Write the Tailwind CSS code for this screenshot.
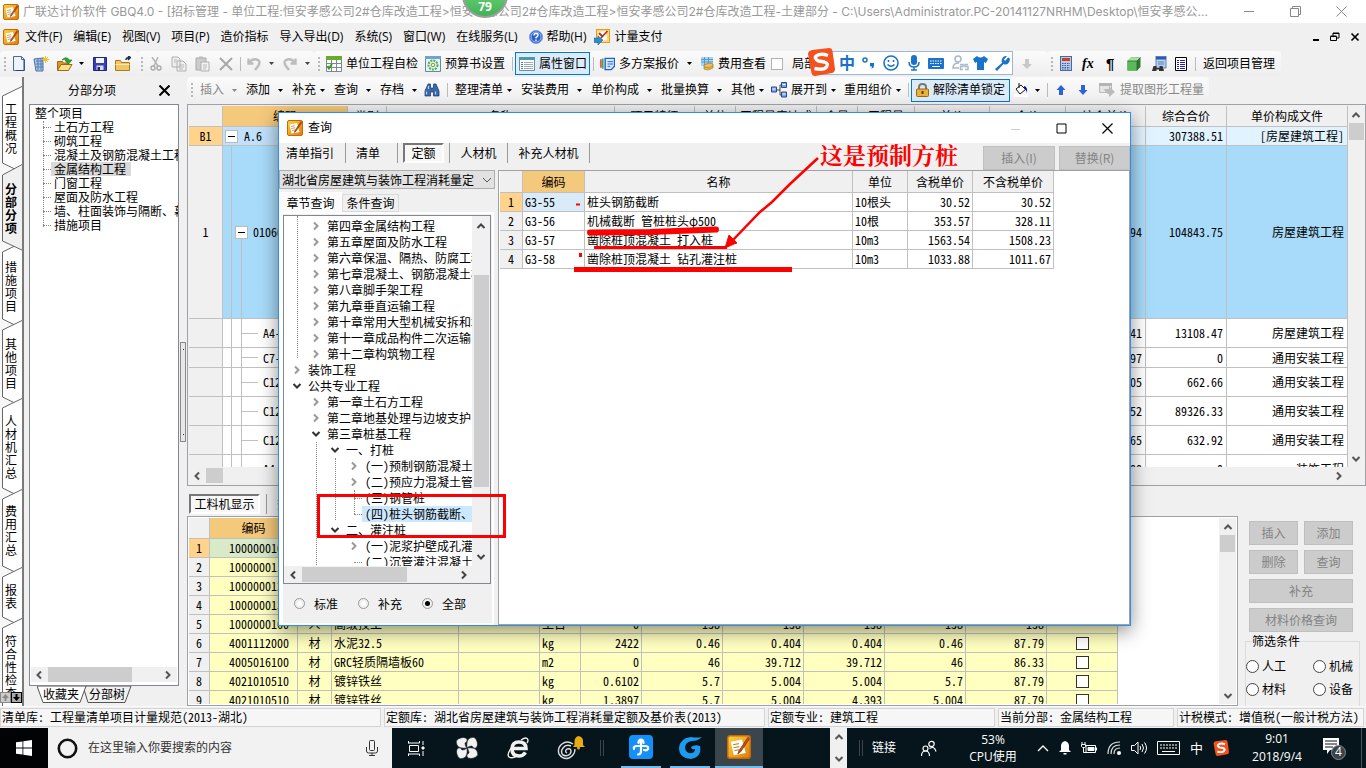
<!DOCTYPE html>
<html lang="zh-CN">
<head>
<meta charset="utf-8">
<title>广联达计价软件 GBQ4.0</title>
<script src="https://cdn.jsdelivr.net/npm/@tailwindcss/browser@4"></script>
</head>
<body class="relative flex h-screen w-full flex-col overflow-hidden bg-[#f0f0f0] font-['Open_Sans','Noto_Sans_CJK_SC',sans-serif] text-[12px] leading-4 whitespace-nowrap text-black">

<svg class="absolute size-0" aria-hidden="true">
  <defs>
    <linearGradient id="gold" x1="0" y1="0" x2="1" y2="1"><stop offset="0" stop-color="#ffd23c"/><stop offset="1" stop-color="#e07a08"/></linearGradient>
    <symbol id="app" viewBox="0 0 16 16"><rect x=".5" y=".5" width="15" height="15" rx="1.5" fill="url(#gold)" stroke="#c46a06"/><path d="M2.500 4.500 10 3l2.500 9-8 1.500z" fill="#fff"/><path d="M4 6.500l4-.8M4.300 8.500l4-.8M4.800 10.500l3.500-.7" stroke="#b98a3c" stroke-width=".8"/><path d="M14 1.500 8 10.500l-.8 2 1.800-1.200L15 2.500z" fill="#c8501a" stroke="#7d2c06" stroke-width=".5"/></symbol>
    <symbol id="left" viewBox="0 0 10 10"><path d="M7 1.500 3.500 5 7 8.500" fill="none" stroke="currentColor" stroke-width="2"/></symbol>
    <symbol id="right" viewBox="0 0 10 10"><path d="M3 1.500 6.500 5 3 8.500" fill="none" stroke="currentColor" stroke-width="2"/></symbol>
    <symbol id="up" viewBox="0 0 10 10"><path d="M1.500 7 5 3.500 8.500 7" fill="none" stroke="currentColor" stroke-width="2"/></symbol>
    <symbol id="down" viewBox="0 0 10 10"><path d="M1.500 3 5 6.500 8.500 3" fill="none" stroke="currentColor" stroke-width="2"/></symbol>
    <symbol id="tri" viewBox="0 0 5 3"><path d="M0 0h5L2.500 3z" fill="currentColor"/></symbol>
    <symbol id="sogou" viewBox="0 0 28 28"><path d="M5 2 22 0q3 0 3.500 3L28 21q0 3-3 4L8 28q-3 0-3.500-3L1 6q0-3 4-4z" fill="#f4511e"/><path d="M21 7.500Q14 5 10 7.500t1.500 5.500l6 1q4.500 1.500 2 5t-12 1.500" fill="none" stroke="#fff" stroke-width="3.400"/></symbol>
  </defs>
</svg>

<!-- Title bar -->
<header class="flex h-[23px] shrink-0 items-center bg-white pl-[3px] text-[#999]">
  <svg class="size-4"><use href="#app"/></svg>
  <h1 class="ml-1 flex-1 overflow-hidden font-['Inter','Noto_Sans_CJK_SC',sans-serif] text-[12px] font-normal">广联达计价软件 GBQ4.0 - [招标管理 - 单位工程:恒安孝感公司2#仓库改造工程&gt;恒安孝感公司2#仓库改造工程&gt;恒安孝感公司2#仓库改造工程-土建部分 - C:\Users\Administrator.PC-20141127NRHM\Desktop\恒安孝感公...</h1>
  <div class="mr-[19px] flex gap-[35px]">
    <button aria-label="最小化"><svg class="size-[11px]" viewBox="0 0 11 11"><path d="M0 5.500h10" stroke="#888"/></svg></button>
    <button aria-label="还原"><svg class="size-[11px]" viewBox="0 0 11 11"><path d="M.5 2.500h8v8h-8zM2.500 2.500v-2h8v8h-2" fill="none" stroke="#888"/></svg></button>
    <button aria-label="关闭"><svg class="size-[11px]" viewBox="0 0 11 11"><path d="M.5.5l10 10M10.500.5l-10 10" stroke="#888"/></svg></button>
  </div>
</header>

<!-- Menu bar -->
<nav class="flex h-[27px] shrink-0 items-center pl-[3px]">
  <svg class="mr-[6px] size-4"><use href="#app"/></svg>
  <div class="flex flex-1 items-center gap-[11px]">
    <button>文件(F)</button><button>编辑(E)</button><button>视图(V)</button><button>项目(P)</button><button>造价指标</button><button>导入导出(D)</button><button>系统(S)</button><button>窗口(W)</button><button>在线服务(L)</button>
    <button class="flex items-center gap-[4px]"><svg class="size-[14px]" viewBox="0 0 14 14"><circle cx="7" cy="7" r="6.500" fill="#2a5fd0" stroke="#7f9ed8"/><circle cx="7" cy="7" r="5" fill="none" stroke="#cfe0ff" stroke-width=".7"/><path d="M5 5.500Q5 3.500 7 3.500t2 1.700Q9 6.500 7 7.500v1M7 9.500V11" stroke="#fff" stroke-width="1.400" fill="none"/></svg>帮助(H)</button>
    <button class="-ml-1 flex items-center gap-[5px]"><svg class="size-4" viewBox="0 0 16 16"><rect x="2.500" y=".5" width="13" height="13" fill="#fbd67a" stroke="#e09a1c"/><path d="M4 3l8-1 1 9-7 1z" fill="#fff"/><path d="M13.500 2 7 9M5 4l3 3" stroke="#b5371c" stroke-width="1.800"/><path d="M0 9h4V7l5 4-5 5v-2.500H0z" fill="#2a8ed0" stroke="#15558a" stroke-width=".5"/></svg>计量支付</button>
  </div>
  <div class="mr-[6px] flex gap-[10px]">
    <button aria-label="最小化文档"><svg class="size-[10px]" viewBox="0 0 10 10"><path d="M3 8h6" stroke="#000" stroke-width="2"/></svg></button>
    <button aria-label="还原文档"><svg class="size-[10px]" viewBox="0 0 10 10"><path d="M.5 4.500h6v4h-6zM.5 4h6M3 4V1h6v5H7M3 1.500h6" fill="none" stroke="#000"/></svg></button>
    <button aria-label="关闭文档"><svg class="size-[10px]" viewBox="0 0 10 10"><path d="M1.500 1.500l7 7M8.500 1.500l-7 7" stroke="#000" stroke-width="1.700"/></svg></button>
  </div>
</nav>

<!-- Main toolbar -->
<div class="flex h-[27px] shrink-0 items-center" role="toolbar" aria-label="主工具栏">
  <div class="flex h-[25px] w-[138px] items-center rounded-sm bg-gradient-to-b from-[#fbfbfb] to-[#eee] pl-1">
    <i class="mr-[7px] h-[14px] w-0 border-l-2 border-dotted border-[#b8b8b8]"></i>
    <button class="w-[20px]" aria-label="新建"><svg class="w-3 h-[15px]" viewBox="0 0 12 15"><path d="M.5.5h8l3 3v11H.5z" fill="#eef4fd" stroke="#52688c"/><path d="M11 4v10.500H3" stroke="#2b4674" fill="none"/><path d="M8.500.5v3h3" fill="none" stroke="#52688c"/></svg></button>
    <button class="w-[24px]" aria-label="新建向导"><svg class="size-4" viewBox="0 0 16 16"><path d="M1 3l9-1v13H3z" fill="#a8c6ea" stroke="#4a6fa8"/><path d="M3 5h7M3 8h7M3 11h7M5 3v11M8 3v11" stroke="#486ea8" stroke-width=".8"/><path d="M12.500 0v7M9 3.500h7M10 1l5 5M15 1l-5 5" stroke="#f0c020"/></svg></button>
    <button class="w-[36px] flex items-center justify-between pr-[9px]" aria-label="打开"><svg class="size-4" viewBox="0 0 16 16"><path d="M.5 14V5.500h5l1 1.500h5v2" fill="#d89a24" stroke="#9a6a10"/><path d="M.5 14.500 4 8.500h11l-3.500 6z" fill="#fbe08c" stroke="#9a6a10"/><path d="M5 4Q9-.5 12.500 4H15l-3.500 4L8 4.500h2Q8 2.500 5 4z" fill="#2fa52f" stroke="#157015" stroke-width=".6"/></svg><svg class="h-[3px] w-[5px]"><use href="#tri"/></svg></button>
    <button class="w-[22px]" aria-label="保存"><svg class="size-[14px]" viewBox="0 0 14 14"><path d="M.5.5h13v13H.5z" fill="#3a3fae" stroke="#22267a"/><path d="M3 1h8v5H3z" fill="#f4f4ff"/><path d="M3.500 8.500h7V13h-7z" fill="#d8dcf2"/><path d="M4.500 10H7v3H4.500z" fill="#22267a"/></svg></button>
    <button aria-label="关闭项目"><svg class="size-4" viewBox="0 0 16 16"><path d="M.5 14.500V4.500h5l1 2h8v8z" fill="#f2c662" stroke="#a87a20"/><path d="M.5 8.500h14" stroke="#fbe8b0"/><path d="M11 4Q11 1.500 15 1.500M13 0l2.500 1.500L13 4" stroke="#20304c" fill="none" stroke-width="1.500"/></svg></button>
  </div>
  <div class="flex h-[25px] w-[176px] items-center rounded-sm bg-gradient-to-b from-[#fbfbfb] to-[#eee] pl-[3px] text-[#444]">
    <i class="mr-[7px] h-[14px] w-0 border-l-2 border-dotted border-[#b8b8b8]"></i>
    <button class="w-[21px]" aria-label="剪切" disabled><svg class="w-3 h-[14px]" viewBox="0 0 12 14"><path d="M2 0l6 9M8 0 4 9" stroke="#b4b4b4" stroke-width="1.500"/><circle cx="3" cy="11" r="2" fill="none" stroke="#aaa" stroke-width="1.400"/><circle cx="9" cy="11" r="2" fill="none" stroke="#aaa" stroke-width="1.400"/></svg></button>
    <button class="w-[24px]" aria-label="复制" disabled><svg class="size-4" viewBox="0 0 16 16"><path d="M1 1h6l2 2v8H1zM6 5h6l3 3v7H6z" fill="#eee" stroke="#b0b0b0"/><path d="M8 9h5M8 11h5M8 13h4M3 4h3M3 6h2" stroke="#b8b8b8"/></svg></button>
    <button class="w-[24px]" aria-label="粘贴" disabled><svg class="size-4" viewBox="0 0 16 16"><path d="M1 2h10v12H1z" fill="#ccc" stroke="#aaa"/><path d="M4 .5h4V3H4z" fill="#bbb"/><path d="M6 6h8v9H6z" fill="#f2f2f2" stroke="#b0b0b0"/><path d="M8 9h4M8 11h4M8 13h3" stroke="#bbb"/></svg></button>
    <button class="w-[21px]" aria-label="删除" disabled><svg class="size-[14px]" viewBox="0 0 14 14"><path d="M1 1l12 12M13 1 1 13" stroke="#a8a8a8" stroke-width="2"/></svg></button>
    <i class="mr-[6px] h-[14px] w-px bg-[#bbb]"></i>
    <button class="flex w-[36px] items-center justify-between pr-[9px]" aria-label="撤销" disabled><svg class="size-[14px]" viewBox="0 0 14 14"><path d="M1.500 1.500v5h5M2 6Q5 1.500 9.500 2.500t2 6L8 13" fill="none" stroke="#bcbcbc" stroke-width="2.400"/></svg><svg class="h-[3px] w-[5px]"><use href="#tri"/></svg></button>
    <button class="flex w-[27px] items-center justify-between" aria-label="重做" disabled><svg class="size-[14px]" viewBox="0 0 14 14"><path d="M12.500 1.500v5h-5M12 6Q9 1.500 4.500 2.500t-2 6L6 13" fill="none" stroke="#bcbcbc" stroke-width="2.400"/></svg><svg class="h-[3px] w-[5px]"><use href="#tri"/></svg></button>
  </div>
  <div class="flex h-[25px] w-[733px] items-center rounded-sm bg-gradient-to-b from-[#fbfbfb] to-[#eee] pl-[4px]">
    <i class="mr-[6px] h-[14px] w-0 border-l-2 border-dotted border-[#b8b8b8]"></i>
    <button class="flex w-[99px] items-center gap-1"><svg class="size-4" viewBox="0 0 16 16"><path d="M.5.5h15v15H.5z" fill="#fff" stroke="#789"/><path d="M0 0h16v4H0z" fill="#6aaa2c"/><path d="M1 7.500h14M1 11.500h14M5.500 4v12M10.500 4v12" stroke="#789"/><path d="M1.500 10l1.500 2.500L6 8" fill="none" stroke="#3a9a20" stroke-width="2"/></svg>单位工程自检</button>
    <button class="flex w-[87px] items-center gap-1"><svg class="size-4" viewBox="0 0 16 16"><path d="M.5.5h15v15H.5z" fill="#e8f4e8" stroke="#5a8ab0"/><path d="M0 0h16v3H0z" fill="#6ca4d8"/><circle cx="8" cy="9" r="4.500" fill="none" stroke="#5aa45a" stroke-width="2" stroke-dasharray="2 1"/><circle cx="8" cy="9" r="1.800" fill="none" stroke="#5aa45a"/></svg>预算书设置</button>
    <i class="mr-[2px] h-[14px] w-px bg-[#bbb]"></i>
    <button class="flex h-[23px] w-[75px] items-center gap-1 border border-[#0078d7] bg-[#dcebf8] pl-[3px]"><svg class="w-4 h-[14px]" viewBox="0 0 16 14"><path d="M.5.5h15v13H.5z" fill="#fff" stroke="#6a90a0"/><path d="M0 0h16v3H0z" fill="#4a9aa8"/><path d="M2 5.500h2M2 7.500h2M2 9.500h2M2 11.500h2" stroke="#4a8a5a"/><path d="M5 5.500h9M5 7.500h9M5 9.500h9M5 11.500h9" stroke="#9ab"/></svg>属性窗口</button>
    <i class="mr-[6px] ml-[3px] h-[14px] w-px bg-[#bbb]"></i>
    <button class="flex w-[100px] items-center gap-1"><svg class="w-[15px] h-4" viewBox="0 0 16 14"><path d="M1 2v9" stroke="#d03030" stroke-width="1.500"/><path d="M3 1v11" stroke="#30a030" stroke-width="1.500"/><path d="M5.500 1h10v8.500L12 13H5.500z" fill="#dceaff" stroke="#1f5fd0" stroke-width="1.500"/><path d="M8 4.500h6M8 7h6M8 9.500h3" stroke="#1f5fd0"/></svg>多方案报价<svg class="ml-1 h-[3px] w-[5px]"><use href="#tri"/></svg></button>
    <button class="flex w-[71px] items-center gap-1"><svg class="w-[14px] h-[15px]" viewBox="0 0 14 15"><path d="M1 1h12v9H1z" fill="#a8d4f0"/><path d="M1 3.500h12M1 6h12M4.500 1v9M8.500 1v9" stroke="#5a9ac8"/><path d="M4 9l5-2 4 1v4l-5 2-4-1z" fill="#e8c060" stroke="#a8781c" stroke-width=".7"/><path d="M4 11l5 1 4-2" stroke="#a8781c" fill="none" stroke-width=".7"/></svg>费用查看</button>
    <label class="flex items-center gap-[9px]"><input type="checkbox" class="size-[12px] appearance-none border border-[#b0b0b0] bg-white">局部汇总</label>
    <svg class="ml-auto mr-[15px] size-[10px]" viewBox="0 0 10 10"><path d="M3 0h4v5h3L5 10 0 5h3z" fill="#c8c8c8"/></svg>
  </div>
  <div class="flex h-[25px] w-[234px] items-center rounded-sm bg-gradient-to-b from-[#fbfbfb] to-[#eee] pl-[4px]">
    <i class="mr-[7px] h-[14px] w-0 border-l-2 border-dotted border-[#b8b8b8]"></i>
    <button class="w-[22px]" aria-label="计算器"><svg class="w-3 h-[15px]" viewBox="0 0 12 15"><rect x=".5" y=".5" width="11" height="14" fill="#b8cbe8" stroke="#4a68a0"/><path d="M2 2h8v3H2z" fill="#d03a2a"/><path d="M2 7.500h8M2 9.500h8M2 11.500h8M2 13h8" stroke="#3a58a0" stroke-dasharray="1.500 1"/></svg></button>
    <button class="w-[24px] text-left font-['Liberation_Serif',serif] text-[14px] font-bold italic" aria-label="函数">fx</button>
    <button class="w-[21px] text-left font-['Liberation_Sans',sans-serif] text-[15px] font-bold" aria-label="段落">¶</button>
    <button class="w-[24px]" aria-label="模型"><svg class="w-[14px] h-[14px]" viewBox="0 0 14 14"><path d="M.5 4 4 .5h9.500V10L10 13.500H.5z" fill="#2f7a30"/><path d="M.5 4H10v9.500H.5z" fill="#5aba5a"/><path d="M.5 4 4 .5h9.500L10 4z" fill="#a8e0a0"/><path d="M.5 4H10v9.500M10 4 13.500.5" fill="none" stroke="#1f5a20" stroke-width=".7"/></svg></button>
    <button class="w-[24px]" aria-label="查找"><svg class="size-4" viewBox="0 0 16 16"><path d="M5 0h10v12H5z" fill="#b8d0f0" stroke="#5a80b8"/><path d="M5 2h10" stroke="#2a5ab0" stroke-width="3"/><path d="M7 6h6M7 8h6" stroke="#5a80b8"/><path d="M1 15l1.500-5h3v2h3v-2h3l1.500 5H8v-1.500H5.500V15z" fill="#333"/></svg></button>
    <button class="w-[20px]" aria-label="列表"><svg class="w-3 h-[14px]" viewBox="0 0 12 14"><path d="M.5.5h11v13H.5z" fill="#fff" stroke="#000"/><path d="M2 3.500h2M2 5.500h2M2 7.500h2M2 9.500h2M2 11.500h2M5 3.500h5M5 5.500h5M5 7.500h5M5 9.500h5M5 11.500h5" stroke="#2020b0"/></svg></button>
    <i class="mr-[7px] h-[14px] w-px bg-[#bbb]"></i>
    <button>返回项目管理</button>
  </div>
</div>

<main class="flex min-h-0 flex-1 overflow-hidden">
  <!-- Vertical page tabs -->
  <nav class="relative flex w-6 shrink-0 flex-col overflow-hidden border-r-2 border-[#7a7a7a] bg-[#f7f7f7] pt-[9px] font-['Noto_Sans_CJK_SC',sans-serif] text-[12px] leading-[13px]">
    <svg class="absolute top-0 left-0 h-[629px] w-[24px]" viewBox="0 0 24 629" fill="#fff" stroke="#666">
      <path d="M23 9 2.500 19V86L23 96z"/>
      <path d="M23 165 2.500 175V242L23 252z"/>
      <path d="M23 243 2.500 253V320L23 330z"/>
      <path d="M23 321 2.500 331V411L23 421z"/>
      <path d="M23 412 2.500 422V489L23 499z"/>
      <path d="M23 490 2.500 500V540L23 550z"/>
      <path d="M23 541 2.500 551V640H23z"/>
      <path d="M25 87 2.500 98V164L25 174z" fill="#f0f0f0" stroke="none"/><path d="M23 87 2.500 98V164L24 174" fill="none"/>
    </svg>
    <button class="relative flex h-[83px] items-center justify-center"><span class="w-3 whitespace-normal">工程概况</span></button>
    <button class="relative flex h-[78px] items-center justify-center font-bold"><span class="w-3 whitespace-normal">分部分项</span></button>
    <button class="relative flex h-[77px] items-center justify-center"><span class="w-3 whitespace-normal">措施项目</span></button>
    <button class="relative flex h-[78px] items-center justify-center"><span class="w-3 whitespace-normal">其他项目</span></button>
    <button class="relative flex h-[89px] items-center justify-center"><span class="w-3 whitespace-normal">人材机汇总</span></button>
    <button class="relative flex h-[78px] items-center justify-center"><span class="w-3 whitespace-normal">费用汇总</span></button>
    <button class="relative flex h-[53px] items-center justify-center"><span class="w-3 whitespace-normal">报表</span></button>
    <button class="relative flex min-h-0 flex-1 justify-center overflow-hidden pt-3"><span class="w-3 whitespace-normal">符合性检查</span></button>
    <div class="relative mb-[3px] flex h-[11px] shrink-0">
      <button class="flex w-[11px] items-center justify-center border border-[#888] bg-[#ccc]" aria-label="上移"><svg class="size-[7px]" viewBox="0 0 7 7"><path d="M3.500 0 7 4H4.500v3h-2V4H0z" fill="#888"/></svg></button>
      <button class="flex w-[12px] items-center justify-center border border-black bg-[#aaa]" aria-label="下移"><svg class="size-[7px]" viewBox="0 0 7 7"><path d="M3.500 7 7 3H4.500V0h-2v3H0z"/></svg></button>
    </div>
  </nav>

  <!-- Project tree -->
  <section class="ml-[5px] flex w-[150px] shrink-0 flex-col">
    <div class="flex h-[27px] items-center pl-[39px]"><h2 class="flex-1">分部分项</h2><button class="mr-[9px]" aria-label="关闭面板"><svg class="size-[11px]" viewBox="0 0 11 11"><path d="M.5.5l10 10M10.500.5l-10 10" stroke="#000" stroke-width="2"/></svg></button></div>
    <div class="flex min-h-0 flex-1 flex-col border border-[#828790] bg-white font-['Noto_Sans_CJK_SC',sans-serif]">
      <div class="relative flex-1 overflow-hidden pt-[1px] pl-[5px] leading-[14px]">
        <p>整个项目</p>
        <i class="absolute top-[16px] left-[13px] h-[106px] border-l border-dotted border-[#888]"></i>
        <ul class="pl-[8px] [&_li]:flex [&_li]:h-[14px] [&_li]:items-center [&_li]:before:w-[8px] [&_li]:before:shrink-0 [&_li]:before:border-t [&_li]:before:border-dotted [&_li]:before:border-[#888] [&_li]:before:content-['']">
          <li><span class="px-[3px]">土石方工程</span></li>
          <li><span class="px-[3px]">砌筑工程</span></li>
          <li><span class="px-[3px]">混凝土及钢筋混凝土工程</span></li>
          <li><span class="bg-[#d9d9d9] pr-[5px] pl-[3px]">金属结构工程</span></li>
          <li><span class="px-[3px]">门窗工程</span></li>
          <li><span class="px-[3px]">屋面及防水工程</span></li>
          <li><span class="px-[3px]">墙、柱面装饰与隔断、幕墙工程</span></li>
          <li><span class="px-[3px]">措施项目</span></li>
        </ul>
      </div>
      <div class="mx-px mb-[3px] flex h-[15px] shrink-0 items-center bg-[#f0f0f0] text-[#555]"><svg class="mx-[3px] size-[10px]"><use href="#left"/></svg><i class="ml-[1px] h-full w-[84px] bg-[#cdcdcd]"></i><svg class="mr-[4px] ml-auto size-[10px]"><use href="#right"/></svg></div>
    </div>
    <div class="relative flex h-[20px] items-start pl-[8px] font-['Noto_Sans_CJK_SC',sans-serif]">
      <svg class="absolute top-0 left-[8px] h-[17px] w-[96px]" viewBox="0 0 96 17"><path d="M46 0h48l-6 16.500H51z" fill="#f0f0f0" stroke="#555"/><path d="M0 0h49l-6 16.500H6z" fill="#fff" stroke="#555"/></svg>
      <button class="relative w-[46px] pl-[6px] text-left">收藏夹</button><button class="relative pl-[6px]">分部树</button>
    </div>
  </section>

  <div class="flex w-2 shrink-0 items-center justify-center"><i class="flex h-[100px] w-[6px] flex-col items-center justify-between border border-[#888] bg-[#e8e8e8] py-[6px]"><b class="size-px bg-[#2020a0]"></b><b class="size-px bg-[#2020a0]"></b></i></div>

  <section class="flex min-w-0 flex-1 flex-col">
    <!-- Edit toolbar -->
    <div class="flex h-[27px] shrink-0" role="toolbar" aria-label="编辑工具栏">
      <div class="flex h-[26px] w-[1022px] items-center rounded-sm bg-gradient-to-b from-[#fbfbfb] to-[#eee] pl-[4px] [&_button]:flex [&_button]:shrink-0 [&_button]:items-center">
        <i class="mr-[7px] h-[14px] w-0 border-l-2 border-dotted border-[#b8b8b8]"></i>
        <button class="w-[46px] gap-[8px] text-[#888]" disabled>插入<svg class="h-[3px] w-[5px]"><use href="#tri"/></svg></button>
        <button class="w-[46px] gap-[8px]">添加<svg class="h-[3px] w-[5px]"><use href="#tri"/></svg></button>
        <button class="w-[42px] gap-[4px]">补充<svg class="h-[3px] w-[5px]"><use href="#tri"/></svg></button>
        <button class="w-[46px] gap-[8px]">查询<svg class="h-[3px] w-[5px]"><use href="#tri"/></svg></button>
        <button class="w-[44px] gap-[8px]">存档<svg class="h-[3px] w-[5px]"><use href="#tri"/></svg></button>
        <button class="w-[23px]" aria-label="查找"><svg class="size-4" viewBox="0 0 16 16"><path d="M4 2h2.500v4h3V2H12l3 7v5h-5.500v-4h-3v4H1V9z" fill="#3a68ac" stroke="#16386b" stroke-width=".7"/><path d="M2.500 9.500v3M11.500 9.500v3M4.500 4v3" stroke="#b4d0f4" stroke-width="1.200"/></svg></button>
        <i class="mr-[7px] h-[14px] w-px bg-[#bbb]"></i>
        <button class="w-[66px] gap-[4px]">整理清单<svg class="h-[3px] w-[5px]"><use href="#tri"/></svg></button>
        <button class="w-[70px] gap-[8px]">安装费用<svg class="h-[3px] w-[5px]"><use href="#tri"/></svg></button>
        <button class="w-[70px] gap-[8px]">单价构成<svg class="h-[3px] w-[5px]"><use href="#tri"/></svg></button>
        <button class="w-[70px] gap-[8px]">批量换算<svg class="h-[3px] w-[5px]"><use href="#tri"/></svg></button>
        <button class="w-[40px] gap-[4px]">其他<svg class="h-[3px] w-[5px]"><use href="#tri"/></svg></button>
        <button class="w-[73px] gap-[4px]"><svg class="size-4" viewBox="0 0 16 16"><path d="M5 8h4M9 3v10M9 3h2M9 13h2" stroke="#444" fill="none"/><path d="M.5 5h5v5h-5zM10.500.5h5v5h-5zM10.500 10h5v5h-5z" fill="#7aa4e8" stroke="#2a4a90"/><path d="M1.500 7h3M11.500 2.500h3M11.500 12h3" stroke="#fff"/></svg>展开到<svg class="h-[3px] w-[5px]"><use href="#tri"/></svg></button>
        <button class="w-[64px] gap-[4px]">重用组价<svg class="h-[3px] w-[5px]"><use href="#tri"/></svg></button>
        <i class="mr-[2px] h-[14px] w-px bg-[#bbb]"></i>
        <button class="mr-[4px] h-[23px] w-[99px] gap-[4px] border border-[#0078d7] bg-[#dcebf8] pl-[4px]"><svg class="w-[13px] h-[14px]" viewBox="0 0 13 14"><path d="M3 7V4q0-3 3.500-3T10 4v3" fill="none" stroke="#777" stroke-width="2"/><rect x=".5" y="6" width="12" height="7.500" rx="1" fill="#eab040" stroke="#9a6a10"/><path d="M6.500 8v3" stroke="#5a3a08" stroke-width="2"/></svg>解除清单锁定</button>
        <button class="w-[33px] gap-[7px]" aria-label="填充颜色"><svg class="size-[14px]" viewBox="0 0 14 14"><path d="M0 11h14v3H0z" fill="#fff"/><path d="M2 6l5-4 4.500 4.500L6 11z" fill="#fff" stroke="#111"/><path d="M5 0v5" stroke="#111"/><path d="M10 3q4 1 3 7-1-4-3-4z" fill="#16168a"/></svg><svg class="h-[3px] w-[5px]"><use href="#tri"/></svg></button>
        <i class="mr-[8px] h-[14px] w-px bg-[#bbb]"></i>
        <button class="w-[22px]" aria-label="上移"><svg class="size-[10px]" viewBox="0 0 10 10"><path d="M5 0 9.500 5H7v5H3V5H.5z" fill="#2f62d8"/></svg></button>
        <button class="w-[21px]" aria-label="下移"><svg class="size-[10px]" viewBox="0 0 10 10"><path d="M5 10 9.500 5H7V0H3v5H.5z" fill="#2f62d8"/></svg></button>
        <button class="gap-[5px] text-[#888]" disabled><svg class="size-4" viewBox="0 0 16 16"><path d="M.5 1.500h12v9H.5z" fill="#e4e4e4" stroke="#bbb"/><path d="M0 2.500h13" stroke="#b4b4b4" stroke-width="3"/><path d="M5 7h5V4l6 6-6 5v-3Q7 12 5 7z" fill="#bbb"/></svg>提取图形工程量</button>
      </div>
    </div>

    <!-- Bill of quantities grid -->
    <div class="flex min-h-0 flex-1 flex-col border border-[#a0a0a8] bg-[#f0f0f0] p-px font-['Noto_Sans_Mono_CJK_SC','Noto_Sans_CJK_SC',monospace] leading-[14px]">
      <div class="flex min-h-0 flex-1">
        <div class="min-w-0 flex-1 overflow-hidden bg-white">
          <table class="w-full table-fixed border-separate border-spacing-0 [&_td]:overflow-hidden [&_td]:border-r [&_td]:border-b [&_td]:border-[#c0c0c0] [&_td]:p-0 [&_td]:pr-[3px] [&_td]:text-right [&_th]:overflow-hidden [&_th]:border-r [&_th]:border-b [&_th]:border-[#c0c0c0] [&_th]:bg-[#f0f0f0] [&_th]:p-0 [&_th]:text-center [&_th]:font-normal">
            <colgroup><col class="w-[34px]"><col class="w-[125px]"><col class="w-[39px]"><col><col class="w-[80px]"><col class="w-[41px]"><col class="w-[81px]"><col class="w-[41px]"><col class="w-[57px]"><col class="w-[75px]"><col class="w-[76px]"><col class="w-[80px]"><col class="w-[81px]"><col class="w-[121px]"></colgroup>
            <thead><tr class="h-[21px]"><th></th><th class="!bg-[#f5c97c]">编码</th><th>类别</th><th>名称</th><th>项目特征</th><th>单位</th><th>工程量表达式</th><th>含量</th><th>工程量</th><th>单价</th><th>合价</th><th>综合单价</th><th>综合合价</th><th>单价构成文件</th></tr></thead>
            <tbody>
              <tr class="h-[19px] bg-[#e1f3ff]"><th class="!bg-[#ffd38c]">B1</th><td class="bg-[#c0e0fb]"><div class="flex items-center gap-[6px] pl-[2px]"><button class="flex size-[13px] items-center justify-center border border-[#bbb] bg-white" aria-label="折叠"><i class="h-px w-[7px] bg-black"></i></button>A.6</div></td><td></td><td></td><td></td><td></td><td></td><td></td><td></td><td></td><td></td><td></td><td>307388.51</td><td>[房屋建筑工程]</td></tr>
              <tr class="h-[173px] bg-[#a8dbfa]"><th>1</th><td class="relative"><i class="absolute inset-y-0 left-[8px] w-px bg-[#c0c0c0]"></i><i class="absolute top-1/2 bottom-0 left-[18px] w-px bg-[#c0c0c0]"></i><div class="relative flex items-center gap-[5px] pl-[12px]"><button class="flex size-[13px] items-center justify-center border border-[#bbb] bg-white" aria-label="折叠"><i class="h-px w-[7px] bg-black"></i></button>010606013001</div></td><td></td><td></td><td></td><td></td><td></td><td></td><td></td><td></td><td></td><td>11.94</td><td>104843.75</td><td>房屋建筑工程</td></tr>
              <tr class="h-[29px]"><th></th><td class="relative"><i class="absolute inset-y-0 left-[8px] w-[11px] border-x border-[#c0c0c0]"></i><div class="flex items-center gap-[5px] pl-[19px] before:w-[16px] before:border-t before:border-[#c0c0c0]">A4-165</div></td><td></td><td></td><td></td><td></td><td></td><td></td><td></td><td></td><td></td><td>22.41</td><td>13108.47</td><td>房屋建筑工程</td></tr>
              <tr class="h-[20px]"><th></th><td class="relative"><i class="absolute inset-y-0 left-[8px] w-[11px] border-x border-[#c0c0c0]"></i><div class="flex items-center gap-[5px] pl-[19px] before:w-[16px] before:border-t before:border-[#c0c0c0]">C7-115</div></td><td></td><td></td><td></td><td></td><td></td><td></td><td></td><td></td><td></td><td>15.97</td><td>0</td><td>通用安装工程</td></tr>
              <tr class="h-[29px]"><th></th><td class="relative"><i class="absolute inset-y-0 left-[8px] w-[11px] border-x border-[#c0c0c0]"></i><div class="flex items-center gap-[5px] pl-[19px] before:w-[16px] before:border-t before:border-[#c0c0c0]">C12-10</div></td><td></td><td></td><td></td><td></td><td></td><td></td><td></td><td></td><td></td><td>31.05</td><td>662.66</td><td>通用安装工程</td></tr>
              <tr class="h-[29px]"><th></th><td class="relative"><i class="absolute inset-y-0 left-[8px] w-[11px] border-x border-[#c0c0c0]"></i><div class="flex items-center gap-[5px] pl-[19px] before:w-[16px] before:border-t before:border-[#c0c0c0]">C12-56</div></td><td></td><td></td><td></td><td></td><td></td><td></td><td></td><td></td><td></td><td>10.52</td><td>89326.33</td><td>通用安装工程</td></tr>
              <tr class="h-[29px]"><th></th><td class="relative"><i class="absolute inset-y-0 left-[8px] w-[11px] border-x border-[#c0c0c0]"></i><div class="flex items-center gap-[5px] pl-[19px] before:w-[16px] before:border-t before:border-[#c0c0c0]">C12-57</div></td><td></td><td></td><td></td><td></td><td></td><td></td><td></td><td></td><td></td><td>20.65</td><td>632.92</td><td>通用安装工程</td></tr>
              <tr class="h-[29px]"><th></th><td class="relative"><i class="absolute inset-y-0 left-[8px] w-[11px] border-x border-[#c0c0c0]"></i><div class="flex items-center gap-[5px] pl-[19px] before:w-[16px] before:border-t before:border-[#c0c0c0]">A4-20</div></td><td></td><td></td><td></td><td></td><td></td><td></td><td></td><td></td><td></td><td>10.00</td><td>0</td><td>装饰工程</td></tr>
            </tbody>
          </table>
        </div>
        <div class="flex w-[16px] flex-col items-center text-[#555]"><svg class="mt-[4px] size-[10px]"><use href="#up"/></svg><i class="mt-[3px] h-[17px] w-[15px] bg-[#cdcdcd]"></i><svg class="mt-auto mb-[3px] size-[10px]"><use href="#down"/></svg></div>
      </div>
      <div class="flex h-[17px] shrink-0 items-center text-[#555]"><svg class="mx-[3px] size-[10px]"><use href="#left"/></svg><i class="ml-px h-[15px] w-[17px] bg-[#cdcdcd]"></i><svg class="mr-[20px] ml-auto size-[10px]"><use href="#right"/></svg></div>
    </div>

    <div class="flex h-[30px] shrink-0 items-center gap-[6px] pt-[5px] pl-[2px] font-['Noto_Sans_CJK_SC',sans-serif]">
      <button class="h-[20px] w-[71px] border-2 border-[#777] border-r-white border-b-white bg-[#f7f7f7] leading-4">工料机显示</button><i class="h-5 w-px bg-[#999]"></i><button class="ml-[4px]">查看单价构成</button>
    </div>

    <div class="flex h-[190px] shrink-0">
      <!-- Resource grid -->
      <div class="flex min-w-0 flex-1 border border-[#a0a0a8] bg-white p-px font-['Noto_Sans_Mono_CJK_SC','Noto_Sans_CJK_SC',monospace] leading-[14px]">
        <div class="min-w-0 flex-1 overflow-hidden">
          <table class="w-[929px] table-fixed border-separate border-spacing-0 [&_td]:overflow-hidden [&_td]:border-r [&_td]:border-b [&_td]:border-[#c0c0c0] [&_td]:px-[2px] [&_td]:py-0 [&_td]:text-right [&_th]:border-r [&_th]:border-b [&_th]:border-[#c0c0c0] [&_th]:bg-[#f0f0f0] [&_th]:p-0 [&_th]:text-center [&_th]:font-normal [&_td:nth-child(2)]:pr-[8px] [&_td:nth-child(3)]:text-center [&_td:nth-child(4)]:text-left [&_td:nth-child(6)]:text-left [&_td:last-child]:text-center [&_tr]:h-[19px] [&_tbody]:bg-[#ffffc0] [&_input]:block [&_input]:mx-auto [&_input]:size-[13px] [&_input]:appearance-none [&_input]:border [&_input]:border-[#333] [&_input]:bg-white">
            <colgroup><col class="w-[21px]"><col class="w-[88px]"><col class="w-[34px]"><col class="w-[127px]"><col class="w-[81px]"><col class="w-[41px]"><col class="w-[61px]"><col class="w-[81px]"><col class="w-[81px]"><col class="w-[81px]"><col class="w-[81px]"><col class="w-[81px]"><col class="w-[71px]"></colgroup>
            <thead><tr class="!h-[21px]"><th></th><th class="!bg-[#f5c97c]">编码</th><th>类别</th><th>名称</th><th>规格及型号</th><th>单位</th><th>损耗率</th><th>含量</th><th>数量</th><th>定额价</th><th>市场价</th><th>合价</th><th>暂估</th></tr></thead>
            <tbody>
              <tr class="bg-[#d9eac8]"><th class="!bg-[#ffd38c]">1</th><td>1000000100</td><td>人</td><td>普工</td><td></td><td>工日</td><td>0</td><td>92</td><td>92</td><td>92</td><td>92</td><td>92</td><td></td></tr>
              <tr><th>2</th><td>1000000110</td><td>人</td><td>普工</td><td></td><td>工日</td><td>0</td><td>92</td><td>92</td><td>92</td><td>92</td><td>92</td><td></td></tr>
              <tr><th>3</th><td>1000000120</td><td>人</td><td>技工</td><td></td><td>工日</td><td>0</td><td>142</td><td>142</td><td>142</td><td>142</td><td>142</td><td></td></tr>
              <tr><th>4</th><td>1000000130</td><td>人</td><td>技工</td><td></td><td>工日</td><td>0</td><td>142</td><td>142</td><td>142</td><td>142</td><td>142</td><td></td></tr>
              <tr><th>5</th><td>1000000160</td><td>人</td><td>高级技工</td><td></td><td>工日</td><td>0</td><td>138</td><td>138</td><td>138</td><td>138</td><td>138</td><td></td></tr>
              <tr><th>6</th><td>4001112000</td><td>材</td><td>水泥32.5</td><td></td><td>kg</td><td>2422</td><td>0.46</td><td>0.404</td><td>0.404</td><td>0.46</td><td>87.79</td><td><input type="checkbox" aria-label="暂估 水泥32.5"></td></tr>
              <tr><th>7</th><td>4005016100</td><td>材</td><td>GRC轻质隔墙板60</td><td></td><td>m2</td><td>0</td><td>46</td><td>39.712</td><td>39.712</td><td>46</td><td>86.33</td><td><input type="checkbox" aria-label="暂估 GRC轻质隔墙板60"></td></tr>
              <tr><th>8</th><td>4021010510</td><td>材</td><td>镀锌铁丝</td><td></td><td>kg</td><td>0.6102</td><td>5.7</td><td>5.004</td><td>5.004</td><td>5.7</td><td>87.79</td><td><input type="checkbox" aria-label="暂估 镀锌铁丝"></td></tr>
              <tr><th>9</th><td>4021010510</td><td>材</td><td>镀锌铁丝</td><td></td><td>kg</td><td>1.3897</td><td>5.7</td><td>5.004</td><td>4.393</td><td>5.004</td><td>87.79</td><td><input type="checkbox" aria-label="暂估 镀锌铁丝 2"></td></tr>
            </tbody>
          </table>
        </div>
        <div class="flex w-[17px] flex-col items-center bg-[#f0f0f0] text-[#555]"><svg class="mt-[4px] size-[10px]"><use href="#up"/></svg><i class="mt-[3px] h-[17px] w-[15px] bg-[#cdcdcd]"></i><svg class="mt-auto mb-[3px] size-[10px]"><use href="#down"/></svg></div>
      </div>
      <!-- Resource actions and filter -->
      <aside class="flex w-[128px] shrink-0 flex-col overflow-hidden font-['Noto_Sans_CJK_SC',sans-serif]">
        <div class="mt-[5px] mr-[13px] ml-[11px] grid shrink-0 grid-cols-2 gap-x-[6px] gap-y-[5px] text-[#838383] [&_button]:h-[24px] [&_button]:border [&_button]:border-[#bfbfbf] [&_button]:bg-[#ccc]">
          <button disabled>插入</button><button disabled>添加</button><button disabled>删除</button><button disabled>查询</button><button class="col-span-2" disabled>补充</button><button class="col-span-2" disabled>材料价格查询</button>
        </div>
        <fieldset class="mt-[1px] mr-[6px] ml-[7px] shrink-0 border border-[#dcdcdc] pb-4 [&_input]:size-[13px] [&_input]:appearance-none [&_input]:rounded-full [&_input]:border [&_input]:border-[#444] [&_input]:bg-white [&_label]:flex [&_label]:items-center [&_label]:gap-[3px]">
          <legend class="ml-[6px] leading-4">筛选条件</legend>
          <div class="grid grid-cols-[67px_1fr] gap-y-[7px] pt-[9px]">
            <label><input type="radio" name="flt">人工</label><label><input type="radio" name="flt">机械</label>
            <label><input type="radio" name="flt">材料</label><label><input type="radio" name="flt">设备</label>
            <label><input type="radio" name="flt">主材</label><label><input type="radio" name="flt">所有</label>
          </div>
        </fieldset>
      </aside>
    </div>
  </section>
</main>

<!-- Status bar -->
<footer class="z-10 flex h-[22px] shrink-0 items-end gap-[3px] border-t border-[#fafafa] bg-[#f0f0f0] pr-[2px] pb-px font-['Noto_Sans_Mono_CJK_SC','Noto_Sans_CJK_SC',monospace] leading-[16px] [&_p]:h-[19px] [&_p]:border [&_p]:border-[#d4d4d4] [&_p]:bg-[#f6f6f6] [&_p]:pl-[1px]">
  <p class="w-[381px]">清单库: 工程量清单项目计量规范(2013-湖北)</p>
  <p class="w-[381px]">定额库: 湖北省房屋建筑与装饰工程消耗量定额及基价表(2013)</p>
  <p class="min-w-0 flex-1">定额专业: 建筑工程</p>
  <p class="w-[176px]">当前分部: 金属结构工程</p>
  <p class="w-[187px]">计税模式: 增值税(一般计税方法)</p>
</footer>

<!-- Windows taskbar -->
<div class="z-10 flex h-10 shrink-0 items-center bg-[#06151b] text-white">
  <button class="flex h-full w-12 items-center justify-center bg-[#010304]" aria-label="开始"><svg class="size-4" viewBox="0 0 16 16"><path d="M0 2.300 6.500 1.400V7.600H0zM7.300 1.300 16 0v7.600H7.300zM0 8.400h6.500v6.200L0 13.700zM7.300 8.400H16V16l-8.700-1.300z" fill="#fff"/></svg></button>
  <label class="flex h-full w-[344px] items-center bg-[#f2f2f2] pr-[14px] pl-[9px] text-[#333]"><svg class="mr-[10px] size-[21px] shrink-0" viewBox="0 0 21 21"><circle cx="10.500" cy="10.500" r="8.700" fill="none" stroke="#111" stroke-width="2.600"/></svg><input class="min-w-0 flex-1 bg-transparent text-[12px] placeholder:text-[#333] placeholder:opacity-100" placeholder="在这里输入你要搜索的内容" aria-label="搜索"><svg class="h-4 w-3" viewBox="0 0 12 16" fill="none" stroke="#333"><rect x="3.500" y=".5" width="5" height="10" rx="1"/><path d="M.5 7v4q0 2 2 2h7q2 0 2-2V7M6 13v2.500M3 15.500h6"/></svg></label>
  <button class="flex w-12 justify-center" aria-label="任务视图"><svg class="size-[17px]" viewBox="0 0 17 17" fill="none" stroke="#fff"><path d="M1.500 5.500h9v6h-9zM.5 1v2.500M.5 3h11M11.500 3V1M.5 16v-2.500M.5 14h11M11.500 14v2M15 1v4M15 11v5"/><path d="M14 7h2v2h-2z" fill="#fff"/></svg></button>
  <button class="flex w-[53px] justify-center" aria-label="风扇"><svg class="size-[22px]" viewBox="0 0 22 22" fill="#f2f2f2" stroke="#06151b" stroke-width=".6"><path d="M11 11Q3 12 1 8t1-6q6-3 9 0 1 3-2 4 0 3 2 5z"/><path d="M11 11Q10 3 14 1t6 1q3 6 0 9-3 1-4-2-3 0-5 2z"/><path d="M11 11q8-1 10 3t-1 6q-6 3-9 0-1-3 2-4 0-3-2-5z"/><path d="M11 11q1 8-3 10t-6-1q-3-6 0-9 3-1 4 2 3 0 5-2z"/></svg></button>
  <button class="flex w-[49px] justify-center" aria-label="浏览器"><svg class="size-[22px]" viewBox="0 0 22 22"><path d="M5 11.500h14Q19 5 12 5T5 12t7 7q4 0 6.500-3.500" fill="none" stroke="#f2f2f2" stroke-width="3.600"/><path d="M14 3Q20-1 21 3q0 2-1 3M6 9Q-1 17 2 20q3 2 8-1" fill="none" stroke="#f2f2f2" stroke-width="1.400"/></svg></button>
  <button class="flex w-[58px] justify-center" aria-label="提醒"><svg class="h-[26px] w-[28px]" viewBox="0 0 28 26"><path d="M16 9Q10 5 5 9T2 19q4 6 10 4 6-3 6-9M14 11q-5-2-8 2t0 7q4 2 7-1 2-3 0-5-3-1-4 1t1 3" fill="none" stroke="#ddd" stroke-width="1.400"/><path d="M21.500 1q5 1 4.500 6v3l2 2H16l1.500-2V7q0-5 4-6z" fill="#e8ac10"/><circle cx="21.500" cy="13" r="1.500" fill="#e8ac10"/></svg></button>
  <i class="h-4 w-[4px] border-x border-[#3c464a]"></i>
  <button class="ml-[17px] flex h-full w-[40px] items-center justify-center border-b-2 border-[#76b9ed]" aria-label="助手"><svg class="size-6" viewBox="0 0 24 24"><rect width="24" height="24" rx="4" fill="#1490fa"/><path d="M9.500 8q0-3.500 2.500-3.500T14.500 8M12 5v11q0 3.500-3 3.500M5 14q-1-3 3-3h8q4 0 3 3-1 2-4 1" stroke="#fff" stroke-width="2.200" fill="none" stroke-linecap="round"/></svg></button>
  <button class="ml-[9px] flex h-full w-[40px] items-center justify-center border-b-2 border-[#76b9ed]" aria-label="广联达"><svg class="size-6" viewBox="0 0 24 24"><path d="M24 2Q20 6 14 6 7 7 7 13q1 6 7 5 3-1 3-4-4 1-4-2 4-3 9-1 2 11-9 13Q1 23 1 13 2 3 13 2q7 1 11 0z" fill="#1c9cf0"/></svg></button>
  <button class="ml-[5px] flex h-full w-[48px] items-center justify-center border-b-2 border-[#76b9ed] bg-[#3a464b]" aria-label="计价软件"><svg class="size-6"><use href="#app"/></svg></button>
  <div class="ml-[67px] flex h-full w-[17px] flex-col items-center justify-between bg-[#f0f0f0] py-[4px] text-[#555]"><svg class="size-[10px]"><use href="#up"/></svg><svg class="size-[10px]"><use href="#down"/></svg></div>
  <i class="ml-[12px] h-4 w-[4px] border-x border-[#3c464a]"></i>
  <button class="ml-[9px]">链接</button>
  <button class="ml-[24px]" aria-label="人脉"><svg class="size-[17px]" viewBox="0 0 17 17" fill="none" stroke="#fff" stroke-width="1.200"><circle cx="11.500" cy="4" r="2.700"/><circle cx="5.500" cy="8.500" r="2.500"/><path d="M1.500 16q0-5 4-5t4 5M9.500 8.500q5-3 6.500 3"/></svg></button>
  <p class="ml-auto w-[62px] text-center leading-[17px]">53%<br>CPU使用</p>
  <div class="ml-[13px] flex items-center gap-[10px]">
    <button aria-label="显示隐藏的图标"><svg class="h-[8px] w-3" viewBox="0 0 12 8"><path d="M1 7l5-5 5 5" fill="none" stroke="#fff" stroke-width="1.300"/></svg></button>
    <svg class="h-[14px] w-3" viewBox="0 0 12 14"><path d="M6 0q4 1 4 5v4l2 2H0l2-2V5q0-4 4-5z" fill="#fff"/><path d="M4.500 12h3v1.500h-3z" fill="#fff"/></svg>
    <svg class="h-3 w-4" viewBox="0 0 16 12" fill="none" stroke="#fff"><path d="M5 3.500h9.500v7H5zM15.500 5.500v3M1 0v2M4 0v2M.5 2.500h4v2l-1 1h-2l-1-1zM2.500 6v4.500H5"/><path d="M7 5.500h6v3H7z" fill="#fff"/></svg>
    <svg class="size-[14px]" viewBox="0 0 14 14" fill="none" stroke="#ddd" stroke-width="1.200"><path d="M1 13Q1 1 13 1M4 13q0-9 9-9M7 13q0-6 6-6"/><circle cx="12" cy="12" r="1.500" fill="#fff"/></svg>
    <svg class="h-[14px] w-4" viewBox="0 0 16 14" fill="none" stroke="#fff"><path d="M.5 4.500h3L7 1v12L3.500 9.500h-3zM9 5q1.500 2 0 4M11 3q3 4 0 8M13.500 1.500q4 5.500 0 11"/></svg>
    <svg class="h-[14px] w-[23px]" viewBox="0 0 23 14" fill="none" stroke="#fff"><path d="M.5.500h22v13H.5z"/><path d="M3 4h17M3 7h17" stroke-dasharray="2 1"/><path d="M5 10.500h13"/></svg>
    <button class="text-[13px]">中</button>
    <svg class="size-[16px]"><use href="#sogou" /></svg>
  </div>
  <p class="ml-[18px] w-[60px] text-center leading-[18px]">9:01<br>2018/9/4</p>
  <button class="relative ml-[15px] mr-[15px]" aria-label="4 条通知"><svg class="h-6 w-6" viewBox="0 0 24 24"><path d="M1 2h16v12H8l-3 4v-4H1z" fill="#fff"/><path d="M3 5h12M3 8h12M3 11h8" stroke="#06151b"/><circle cx="16.500" cy="16.500" r="7" fill="#3a4246" stroke="#888"/></svg><span class="absolute top-[8px] left-[13px] text-[12px]">4</span></button>
  <i class="mr-1 h-full w-px bg-[#4a5458]"></i>
</div>

<!-- Query dialog window -->
<div role="dialog" aria-label="查询" class="absolute top-[112px] left-[278px] z-20 flex h-[514px] w-[853px] flex-col border border-[#2f8ded] bg-white shadow-[0_5px_18px_rgba(0,0,0,0.45)]">
  <div class="flex h-[30px] shrink-0 items-center pr-[17px] pl-[8px]">
    <svg class="mr-[5px] size-4"><use href="#app"/></svg><h2 class="flex-1">查询</h2>
    <div class="flex gap-[35px]">
      <button aria-label="最小化"><svg class="size-[11px]" viewBox="0 0 11 11"><path d="M1 6.500h9" stroke="#ccc"/></svg></button>
      <button aria-label="最大化"><svg class="size-[11px]" viewBox="0 0 11 11"><path d="M1 1h9v9H1z" fill="none" stroke="#000"/></svg></button>
      <button aria-label="关闭"><svg class="size-[11px]" viewBox="0 0 11 11"><path d="M.5.5l10 10M10.500.5l-10 10" stroke="#000" stroke-width="1.200"/></svg></button>
    </div>
  </div>
  <div class="flex h-[27px] shrink-0 items-start bg-[#f0f0f0] font-['Noto_Sans_CJK_SC',sans-serif] [&_i]:h-5 [&_i]:w-px [&_i]:bg-[#999]">
    <button class="h-5 w-[66px] pl-[7px] text-left">清单指引</button><i></i>
    <button class="h-5 w-[51px] pl-[10px] text-left">清单</button><i></i>
    <button class="mx-[5px] h-[20px] w-[41px] border-2 border-[#777] border-r-white border-b-white bg-[#f7f7f7] leading-4">定额</button><i></i>
    <button class="h-5 w-[57px]">人材机</button><i></i>
    <button class="h-5 w-[81px]">补充人材机</button><i></i>
    <div class="ml-auto mt-[3px] flex gap-[4px] text-[#838383] [&_button]:h-[24px] [&_button]:border [&_button]:border-[#bfbfbf] [&_button]:bg-[#ccc]"><button class="w-[72px]" disabled>插入(I)</button><button class="w-[71px]" disabled>替换(R)</button></div>
  </div>
  <div class="flex min-h-0 flex-1 font-['Noto_Sans_Mono_CJK_SC','Noto_Sans_CJK_SC',monospace]">
    <div class="flex w-[219px] shrink-0 flex-col bg-[#f0f0f0]">
      <div class="relative mr-[3px] h-[19px] shrink-0"><select aria-label="定额库" class="h-full w-full appearance-none overflow-hidden border border-[#adadad] bg-[#e1e1e1] pr-[20px] pl-[2px] leading-4"><option>湖北省房屋建筑与装饰工程消耗量定额及基价表(2013)</option></select><svg class="pointer-events-none absolute top-[5px] right-[3px] size-[10px]" viewBox="0 0 10 10"><path d="M1 3l4 4 4-4" fill="none" stroke="#555"/></svg></div>
      <div class="mt-[3px] flex h-[20px] shrink-0 items-end"><button class="h-[20px] w-[63px] border border-b-0 border-[#fff] bg-[#fbfbfb]">章节查询</button><button class="h-[18px] w-[57px] border border-[#dadada]">条件查询</button></div>
      <div class="mr-[4px] flex min-h-0 flex-1 flex-col border-t-2 border-r-2 border-b-2 border-l-4 border-white pr-px pt-px">
        <div class="flex min-h-0 flex-1 flex-col border border-[#828790] bg-white">
          <div class="flex min-h-0 flex-1">
            <div class="relative min-w-0 flex-1 overflow-hidden pt-[2px]">
              <i class="absolute top-0 left-[13px] h-[142px] border-l border-dotted border-[#888]"></i>
              <i class="absolute top-[226px] left-[32px] h-[125px] border-l border-dotted border-[#888]"></i>
              <i class="absolute top-[242px] left-[51px] h-[62px] border-l border-dotted border-[#888]"></i>
              <i class="absolute top-[274px] left-[70px] h-[24px] border-l border-dotted border-[#888]"></i>
              <ul class="[&_li]:flex [&_li]:h-4 [&_li]:items-center [&_svg]:mr-[6px] [&_svg]:size-[10px] [&_svg]:shrink-0">
                <li class="pl-[27px]"><svg class="text-[#999]"><use href="#right"/></svg>第四章金属结构工程</li>
                <li class="pl-[27px]"><svg class="text-[#999]"><use href="#right"/></svg>第五章屋面及防水工程</li>
                <li class="pl-[27px]"><svg class="text-[#999]"><use href="#right"/></svg>第六章保温、隔热、防腐工程</li>
                <li class="pl-[27px]"><svg class="text-[#999]"><use href="#right"/></svg>第七章混凝土、钢筋混凝土构件</li>
                <li class="pl-[27px]"><svg class="text-[#999]"><use href="#right"/></svg>第八章脚手架工程</li>
                <li class="pl-[27px]"><svg class="text-[#999]"><use href="#right"/></svg>第九章垂直运输工程</li>
                <li class="pl-[27px]"><svg class="text-[#999]"><use href="#right"/></svg>第十章常用大型机械安拆和场外运输</li>
                <li class="pl-[27px]"><svg class="text-[#999]"><use href="#right"/></svg>第十一章成品构件二次运输</li>
                <li class="pl-[27px]"><svg class="text-[#999]"><use href="#right"/></svg>第十二章构筑物工程</li>
                <li class="pl-[8px]"><svg class="text-[#999]"><use href="#right"/></svg>装饰工程</li>
                <li class="pl-[8px]"><svg class="text-[#333]"><use href="#down"/></svg>公共专业工程</li>
                <li class="pl-[27px]"><svg class="text-[#999]"><use href="#right"/></svg>第一章土石方工程</li>
                <li class="pl-[27px]"><svg class="text-[#999]"><use href="#right"/></svg>第二章地基处理与边坡支护</li>
                <li class="pl-[27px]"><svg class="text-[#333]"><use href="#down"/></svg>第三章桩基工程</li>
                <li class="pl-[46px]"><svg class="text-[#333]"><use href="#down"/></svg>一、打桩</li>
                <li class="pl-[65px]"><svg class="text-[#999]"><use href="#right"/></svg>(一)预制钢筋混凝土桩</li>
                <li class="pl-[65px]"><svg class="text-[#999]"><use href="#right"/></svg>(二)预应力混凝土管桩</li>
                <li class="pl-[70px]"><i class="mr-[3px] w-[8px] shrink-0 border-t border-dotted border-[#888]"></i>(三)钢管桩</li>
                <li class="pl-[70px]"><i class="w-[8px] shrink-0 border-t border-dotted border-[#888]"></i><span class="bg-[#cce8ff] pl-[3px]">(四)桩头钢筋截断、凿除</span></li>
                <li class="pl-[46px]"><svg class="text-[#333]"><use href="#down"/></svg>二、灌注桩</li>
                <li class="pl-[65px]"><svg class="text-[#999]"><use href="#right"/></svg>(一)泥浆护壁成孔灌注桩</li>
                <li class="pl-[70px]"><i class="mr-[3px] w-[8px] shrink-0 border-t border-dotted border-[#888]"></i>(二)沉管灌注混凝土桩</li>
              </ul>
            </div>
            <div class="flex w-[18px] flex-col items-center bg-[#f0f0f0] text-[#444]"><svg class="mt-[5px] size-[10px] shrink-0"><use href="#up"/></svg><i class="mt-[44px] h-[212px] w-[15px] shrink-0 bg-[#cdcdcd]"></i><svg class="mt-auto mb-[4px] size-[10px] shrink-0"><use href="#down"/></svg></div>
          </div>
          <div class="flex h-[17px] shrink-0 items-center bg-[#f0f0f0] text-[#444]"><svg class="mx-[4px] size-[10px]"><use href="#left"/></svg><i class="h-[15px] w-[105px] bg-[#cdcdcd]"></i><svg class="mr-[21px] ml-auto size-[10px]"><use href="#right"/></svg></div>
        </div>
        <div class="flex h-[39px] shrink-0 items-center gap-[20px] bg-[#f0f0f0] pl-[11px] [&_input]:size-[11px] [&_input]:shrink-0 [&_input]:appearance-none [&_input]:rounded-full [&_input]:border [&_input]:border-[#999] [&_input]:bg-white [&_input]:bg-clip-content [&_input]:p-[2px] [&_label]:flex [&_label]:items-center [&_label]:gap-[9px]">
          <label><input type="radio" name="src">标准</label><label><input type="radio" name="src">补充</label><label><input type="radio" name="src" checked class="checked:bg-black">全部</label>
        </div>
      </div>
    </div>
    <div class="min-w-0 flex-1 border border-[#a0a0a8] bg-white pl-px leading-[14px]">
      <table class="w-[554px] table-fixed border-separate border-spacing-0 [&_td]:overflow-hidden [&_td]:border-r [&_td]:border-b [&_td]:border-[#c0c0c0] [&_td]:px-[2px] [&_td]:py-0 [&_th]:border-r [&_th]:border-b [&_th]:border-[#c0c0c0] [&_th]:bg-[#f0f0f0] [&_th]:p-0 [&_th]:text-center [&_th]:font-normal [&_tr]:h-[19px] [&_td:nth-child(n+5)]:text-right">
        <colgroup><col class="w-[23px]"><col class="w-[62px]"><col class="w-[268px]"><col class="w-[55px]"><col class="w-[65px]"><col class="w-[81px]"></colgroup>
        <thead><tr class="!h-[22px]"><th></th><th class="!bg-[#f5c97c]">编码</th><th>名称</th><th>单位</th><th>含税单价</th><th>不含税单价</th></tr></thead>
        <tbody>
          <tr><th class="!bg-[#ffd38c]">1</th><td class="bg-[#d9eaf9]">G3-55</td><td>桩头钢筋截断</td><td>10根头</td><td>30.52</td><td>30.52</td></tr>
          <tr><th>2</th><td>G3-56</td><td>机械截断 管桩桩头φ500</td><td>10根</td><td>353.57</td><td>328.11</td></tr>
          <tr><th>3</th><td>G3-57</td><td>凿除桩顶混凝土 打入桩</td><td>10m3</td><td>1563.54</td><td>1508.23</td></tr>
          <tr><th>4</th><td>G3-58</td><td>凿除桩顶混凝土 钻孔灌注桩</td><td>10m3</td><td>1033.88</td><td>1011.67</td></tr>
        </tbody>
      </table>
    </div>
  </div>
</div>

<!-- Hand-drawn review marks -->
<svg class="pointer-events-none absolute top-0 left-0 z-30 h-[768px] w-[1366px]" viewBox="0 0 1366 768" fill="none" stroke="#f00">
  <path d="M590 232.500 650 232l66-2.500" stroke-width="6" stroke-linecap="round"/>
  <path d="M594 247.500h133" stroke-width="3"/>
  <path d="M574 269.500h218" stroke-width="5"/>
  <path d="M818 158 790 184l-18 18-12 10-28 29" stroke-width="2.500"/>
  <path d="M725 248l4-13 3 3 5 5-3 1z" fill="#f00"/>
  <path d="M576 204.500h4" stroke-width="2"/><path d="M580.500 253v4" stroke-width="3"/>
  <path d="M318.500 495.500h186v41h-186z" stroke-width="3"/>
</svg>
<p class="absolute top-[143px] left-[820px] z-30 font-['Noto_Serif_CJK_SC','Noto_Sans_CJK_SC',serif] text-[23px] leading-6 font-bold text-[#f00]">这是预制方桩</p>

<!-- Input method bar -->
<div class="absolute top-[51px] left-[820px] z-30 flex h-[24px] w-[193px] items-center border border-[#9db8d4] bg-white pl-[18px] text-[#1a73c8]">
  <svg class="absolute -top-[4px] -left-[14px] size-[28px]"><use href="#sogou"/></svg>
  <button class="w-[22px] text-left text-[16px] font-bold">中</button>
  <svg class="w-[22px] h-4" viewBox="0 0 22 16"><circle cx="4" cy="5" r="2" fill="none" stroke="currentColor" stroke-width="1.500"/><path d="M9 8h4v3q0 2-3 3 1-1 1-2.500H9z" fill="currentColor"/></svg>
  <svg class="size-4" viewBox="0 0 16 16" fill="none" stroke="currentColor" stroke-width="1.600"><circle cx="8" cy="8" r="7"/><path d="M4.500 9.500Q8 13 11.500 9.500M5.500 5v2M10.500 5v2"/></svg>
  <svg class="ml-[9px] w-3 h-4" viewBox="0 0 12 16"><rect x="3" width="6" height="10" rx="3" fill="currentColor"/><path d="M1 7q0 5 5 5t5-5M6 12v3M3 15h6" fill="none" stroke="currentColor" stroke-width="1.500"/></svg>
  <svg class="ml-[8px] w-4 h-[11px]" viewBox="0 0 16 11"><rect width="16" height="11" rx="1" fill="currentColor"/><path d="M2 3h12M2 5.500h12" stroke="#fff" stroke-dasharray="1.500 1"/><path d="M4 8.500h8" stroke="#fff"/></svg>
  <svg class="ml-[8px] w-[17px] h-4" viewBox="0 0 17 16" fill="none" stroke="#a8b8cc" stroke-width="1.500"><circle cx="6" cy="4" r="3"/><path d="M7 13H1q0-5 6-5M8 9.500h3v2H8.500v3H11M16 9.500h-3v2h3v3h-3"/></svg>
  <svg class="ml-[4px] w-[15px] h-[14px]" viewBox="0 0 15 14"><path d="M4 0q3.500 3 7 0l4 3-2 4-2-1v8H4V6L2 7 0 3z" fill="currentColor"/></svg>
  <svg class="ml-[7px] size-[15px]" viewBox="0 0 15 15"><path d="M13 1.500 10 5 9 3.500 12 0Q8-.5 7 3t.5 3.500L0 13l2 2 6.500-7q3 1.500 5-1t1-5z" fill="currentColor"/></svg>
</div>

<!-- Floating accelerator ball -->
<div class="absolute -top-[28px] left-[462px] z-30 flex size-[46px] items-end justify-center rounded-full border-2 border-[#9a9f9a] bg-gradient-to-b from-[#7fe08a] to-[#3fb455] pb-[1px] text-[12px] font-bold text-white">79</div>
</body>
</html>
